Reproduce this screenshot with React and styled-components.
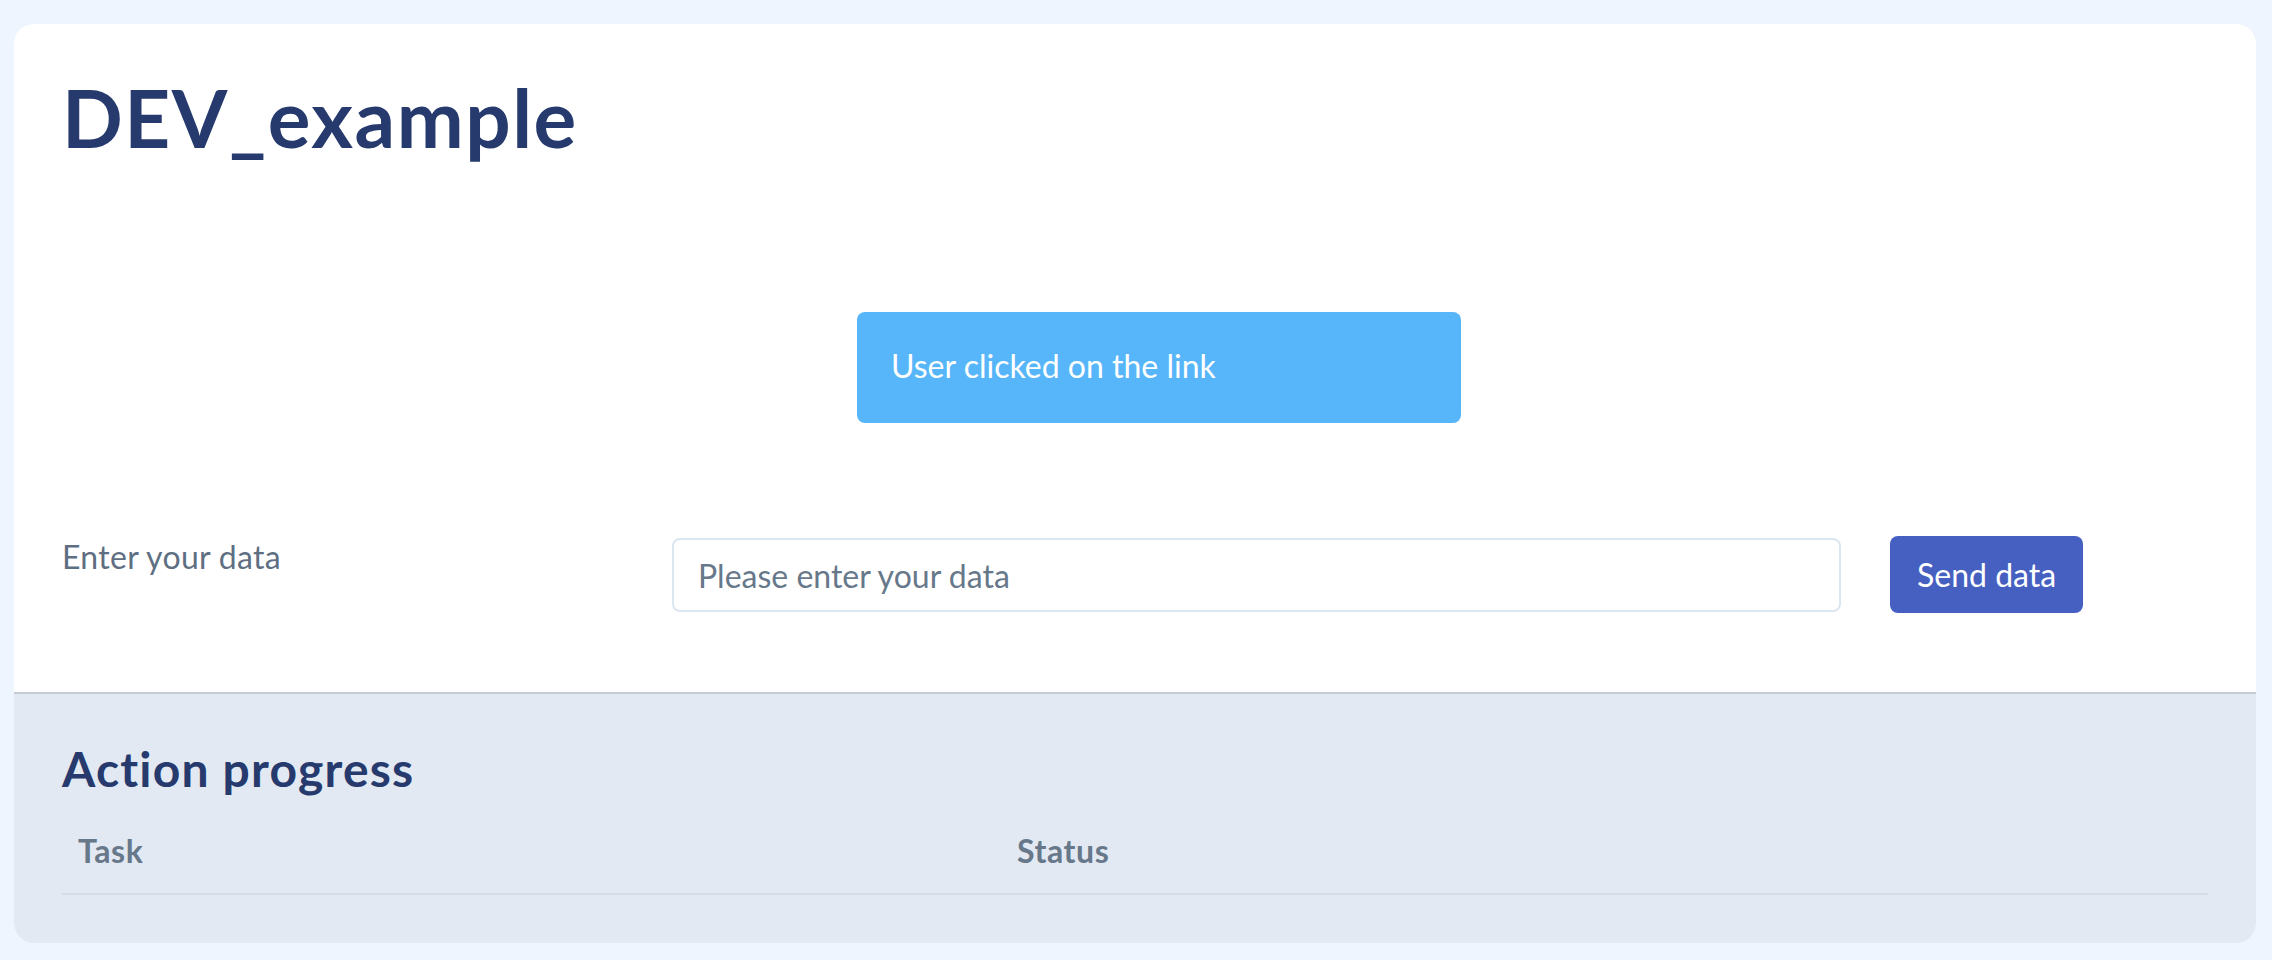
import styled, { createGlobalStyle } from 'styled-components';
import { useState } from "react";

const GlobalStyle = createGlobalStyle`
  * {
    box-sizing: border-box;
  }
  body {
    margin: 0;
    background: #eff5fe;
    font-family: Lato, "Noto Sans", sans-serif;
  }
`;

const Page = styled.div`
  min-height: 100vh;
  padding: 24px 16px 17px 14px;
`;

const Card = styled.div`
  background: white;
  border-radius: 20px;
  overflow: hidden;
`;

const Main = styled.div`
  padding: 45px 48px 79px;
`;

const Title = styled.h1`
  margin: 0;
  font-size: 80px;
  line-height: 1.2;
  font-weight: 700;
  letter-spacing: 1.5px;
  color: #263a6e;
`;

const Alert = styled.div`
  width: 604px;
  margin: 147px 0 0 ${(p) => p.offset}px;
  padding: 30px 34px 33px;
  background: #57b6f9;
  border-radius: 8px;
  color: white;
  font-size: 32px;
  line-height: 1.5;
`;

const Form = styled.form`
  display: flex;
  align-items: flex-start;
  margin-top: 113px;
`;

const Label = styled.label`
  flex: 0 0 610px;
  font-size: 32px;
  line-height: 1.3;
  letter-spacing: 0.3px;
  color: #5f6f83;
`;

const Input = styled.input`
  flex: 0 0 1169px;
  height: 74px;
  margin-top: 2px;
  padding: 0 24px;
  border: 2px solid #dce6f1;
  border-radius: 8px;
  font-family: inherit;
  font-size: 32px;
  color: #2d3748;
  outline: none;
  &::placeholder {
    color: #66788a;
  }
`;

const Button = styled.button`
  height: 77px;
  margin-left: 49px;
  padding: 0 27px;
  border: none;
  border-radius: 8px;
  background: #4660c1;
  color: white;
  font-family: inherit;
  font-size: 32px;
  cursor: pointer;
`;

const Progress = styled.section`
  background: #e3e9f2;
  border-top: 2px solid #c6ccd6;
  padding: 46px 48px 48px;
`;

const Heading = styled.h2`
  margin: 0 0 11px;
  font-size: 48px;
  line-height: 1.2;
  font-weight: 700;
  letter-spacing: 1.2px;
  color: #263a6e;
`;

const Table = styled.table`
  width: 100%;
  border-collapse: collapse;
`;

const Th = styled.th`
  width: ${(p) => p.width || 'auto'};
  padding: 18px 16px;
  text-align: left;
  font-size: 32px;
  line-height: 1.5;
  font-weight: 700;
  letter-spacing: 0.6px;
  color: #66788a;
  border-bottom: 2px solid #d8dde4;
`;

const App = () => {
  const [data, setData] = useState("");

  const handleSubmit = (e) => {
    e.preventDefault();
  };

  return (
    <Page>
      <GlobalStyle />
      <Card>
        <Main>
          <Title>DEV_example</Title>
          <Alert offset={795}>User clicked on the link</Alert>
          <Form onSubmit={handleSubmit}>
            <Label htmlFor="data">Enter your data</Label>
            <Input
              id="data"
              placeholder="Please enter your data"
              value={data}
              onChange={(e) => setData(e.target.value)}
            />
            <Button type="submit">Send data</Button>
          </Form>
        </Main>
        <Progress>
          <Heading>Action progress</Heading>
          <Table>
            <thead>
              <tr>
                <Th width="939px">Task</Th>
                <Th>Status</Th>
              </tr>
            </thead>
          </Table>
        </Progress>
      </Card>
    </Page>
  );
};

export default App;
